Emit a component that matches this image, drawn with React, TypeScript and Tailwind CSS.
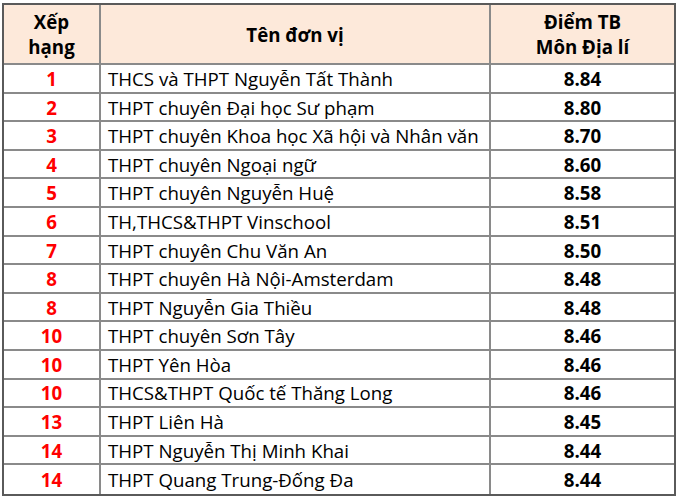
import React from "react";

const rows: [string, string, string][] = [
  ["1", "THCS và THPT Nguyễn Tất Thành", "8.84"],
  ["2", "THPT chuyên Đại học Sư phạm", "8.80"],
  ["3", "THPT chuyên Khoa học Xã hội và Nhân văn", "8.70"],
  ["4", "THPT chuyên Ngoại ngữ", "8.60"],
  ["5", "THPT chuyên Nguyễn Huệ", "8.58"],
  ["6", "TH,THCS&THPT Vinschool", "8.51"],
  ["7", "THPT chuyên Chu Văn An", "8.50"],
  ["8", "THPT chuyên Hà Nội-Amsterdam", "8.48"],
  ["8", "THPT Nguyễn Gia Thiều", "8.48"],
  ["10", "THPT chuyên Sơn Tây", "8.46"],
  ["10", "THPT Yên Hòa", "8.46"],
  ["10", "THCS&THPT Quốc tế Thăng Long", "8.46"],
  ["13", "THPT Liên Hà", "8.45"],
  ["14", "THPT Nguyễn Thị Minh Khai", "8.44"],
  ["14", "THPT Quang Trung-Đống Đa", "8.44"],
];

export default function App() {
  return (
    <div className="w-[680px] h-[497px] bg-white pt-[3px] pl-[2px] font-['Open_Sans',sans-serif] text-[18.7px] text-black">
      <div className="w-[674px] border-2 border-[#5a5a5a]">
        <div className="flex h-[60px] bg-[#fde9da] border-b-2 border-[#8a8a8a] font-bold leading-[25px]">
          <div className="w-[97px] flex items-center justify-center text-center border-r-2 border-[#8a8a8a]">
            Xếp
            <br />
            hạng
          </div>
          <div className="w-[390px] flex items-center justify-center border-r-2 border-[#8a8a8a]">
            Tên đơn vị
          </div>
          <div className="flex-1 flex items-center justify-center text-center">
            Điểm TB
            <br />
            Môn Địa lí
          </div>
        </div>
        {rows.map(([rank, name, score], i) => (
          <div
            key={i}
            className={`flex h-[28.6px] leading-none ${i < rows.length - 1 ? "border-b-2 border-[#8a8a8a]" : ""}`}
          >
            <div className="w-[97px] flex items-center justify-center font-bold text-[#ff0000] border-r-2 border-[#8a8a8a] pt-[2px]">
              {rank}
            </div>
            <div className="w-[390px] flex items-center pl-[7px] border-r-2 border-[#8a8a8a] whitespace-nowrap pt-[2px]">
              {name}
            </div>
            <div className="flex-1 flex items-center justify-center font-bold pt-[2px]">{score}</div>
          </div>
        ))}
      </div>
    </div>
  );
}
